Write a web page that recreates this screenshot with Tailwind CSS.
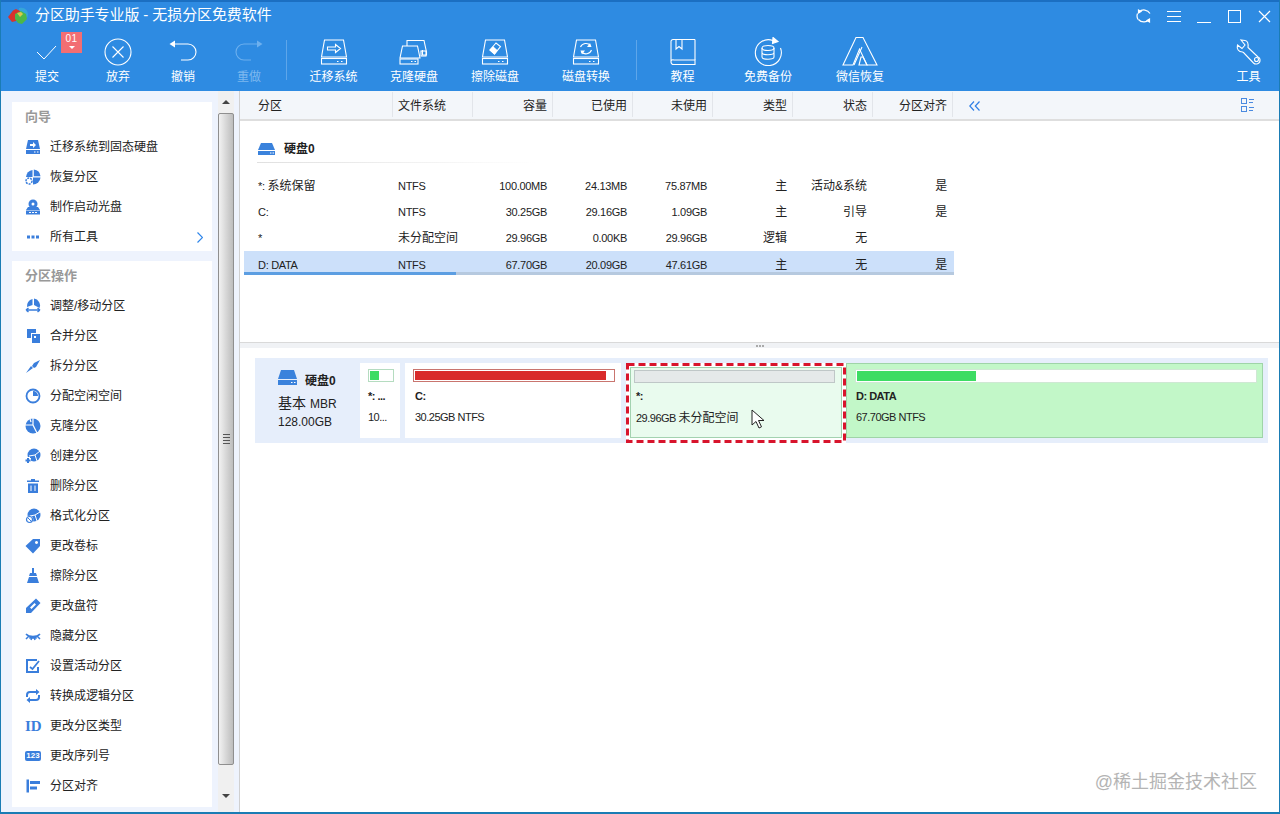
<!DOCTYPE html>
<html lang="zh-CN">
<head>
  <meta charset="UTF-8">
  <title>分区助手专业版</title>
  <script src="https://cdn.jsdelivr.net/npm/@tailwindcss/browser@4"></script>
</head>
<body class="overflow-hidden bg-white">
<div class="relative w-[1280px] h-[814px] flex flex-col overflow-hidden bg-white text-[12px] text-[#222] font-['Liberation_Sans','Noto_Sans_CJK_SC',sans-serif] border-x border-b-2 border-[#1a7cb4]">

  <!-- title bar + toolbar -->
  <header class="-mx-px h-[91px] shrink-0 bg-[#2e8be2] border-t-2 border-[#1b6fc2] text-white">
    <div class="h-[28px] flex items-center">
      <svg class="ml-[7px] w-[22px] h-[18px]" viewBox="0 0 22 18">
        <path d="M12 1c5-1.500 9 2 9 6.500 0 3-2 5-4 5.500l-5-6z" fill="#35a6d8"/>
        <path d="M1 10 6 3.500 9 2l4 2 1 6-5 4-4 1z" fill="#d8322c"/>
        <path d="M8 7l6-3 5 3 1 5-5 5-4-1-3-4z" fill="#4cb848"/>
        <path d="M10 6l4-1 2 2-3 3z" fill="#d9c94a"/>
      </svg>
      <span class="ml-[6px] -mt-[2px] text-[15px] tracking-[-0.1px]">分区助手专业版 - 无损分区免费软件</span>
      <div class="ml-auto mr-px flex">
        <div class="w-[30px] h-[28px] flex items-center justify-center">
          <svg class="w-[16px] h-[16px]" viewBox="0 0 16 16" fill="none" stroke="#fff" stroke-width="1.2"><path d="M3 4a7 7 0 0 1 11 1.500M13.500 11a7 7 0 0 1-11 .5M1.500 5.500A7 7 0 0 0 2 11.500"/><path d="M5 3.500 2.500 2v3zM11 12.500l2.500 1.500v-3z" fill="#fff"/></svg>
        </div>
        <div class="w-[30px] h-[28px] flex items-center justify-center">
          <svg class="w-[14px] h-[13px]" viewBox="0 0 14 13" stroke="#fff" stroke-width="1"><path d="M0 1.500h14M0 6.500h14M0 11.500h14"/></svg>
        </div>
        <div class="w-[30px] h-[28px] flex items-center justify-center">
          <svg class="w-[14px] h-[13px]" viewBox="0 0 14 13" stroke="#fff" stroke-width="1"><path d="M0 12.500h14"/></svg>
        </div>
        <div class="w-[30px] h-[28px] flex items-center justify-center">
          <div class="w-[13px] h-[13px] border-[1.5px] border-white"></div>
        </div>
        <div class="w-[30px] h-[28px] flex items-center justify-center">
          <svg class="w-[13px] h-[13px]" viewBox="0 0 13 13" stroke="#fff" stroke-width="1.2"><path d="M1 1l11 11M12 1 1 12"/></svg>
        </div>
      </div>
    </div>
    <div class="h-[61px] flex pl-[12px]">
      <div class="relative w-[70px] flex flex-col items-center">
        <svg class="mt-[7px] h-[30px] w-[30px]" viewBox="0 0 30 30" fill="none" stroke="#fff" stroke-width="1"><path d="M5 15l7 7L24 9"/></svg>
        <span class="mt-[3px] leading-[14px]">提交</span>
        <div class="absolute left-[49px] top-[2px] w-[21px] h-[21px] bg-[#f26e73] flex flex-col items-center text-[10px] leading-[13px] tracking-[0.5px]">01<span class="mt-[1px] w-0 h-0 border-x-[3px] border-t-[3px] border-x-transparent border-t-white"></span></div>
      </div>
      <div class="w-[72px] flex flex-col items-center">
        <svg class="mt-[7px] h-[30px] w-[30px]" viewBox="0 0 30 30" fill="none" stroke="#fff" stroke-width="1.1"><circle cx="15" cy="15" r="13"/><path d="M9.500 9.500l11 11M20.500 9.500l-11 11"/></svg>
        <span class="mt-[3px] leading-[14px]">放弃</span>
      </div>
      <div class="w-[58px] flex flex-col items-center">
        <svg class="mt-[7px] h-[30px] w-[30px]" viewBox="0 0 30 30" fill="none" stroke="#fff" stroke-width="1.1"><path d="M5 7h15a8 8 0 0 1 0 16h-7"/><path d="M7 3.500v7L1.500 7z" fill="#fff" stroke="none"/></svg>
        <span class="mt-[3px] leading-[14px]">撤销</span>
      </div>
      <div class="w-[74px] flex flex-col items-center text-[#7db8ef]">
        <svg class="mt-[7px] h-[30px] w-[30px]" viewBox="0 0 30 30" fill="none" stroke="#6db0ee" stroke-width="1.1"><path d="M25 7H10a8 8 0 0 0 0 16h7"/><path d="M23 3.500v7L28.500 7z" fill="#6db0ee" stroke="none"/></svg>
        <span class="mt-[3px] leading-[14px]">重做</span>
      </div>
      <div class="w-px h-[40px] mt-[10px] bg-[#5ea6ea]"></div>
      <div class="w-[93px] flex flex-col items-center">
        <svg class="mt-[8px] h-[28px] w-[30px]" viewBox="0 0 30 28" fill="none" stroke="#fff" stroke-width="1.1"><path d="M5.500 2h19L27.500 19h-25z"/><rect x="2.500" y="20.500" width="25" height="5.500"/><path d="M22 23.500h1.500M18 23.500h1.500"/><path d="M8.500 9h8V6.500L21.500 10.500l-5 4V12h-8z"/></svg>
        <span class="mt-[4px] leading-[14px]">迁移系统</span>
      </div>
      <div class="w-[68px] flex flex-col items-center">
        <svg class="mt-[8px] h-[28px] w-[30px]" viewBox="0 0 30 28" fill="none" stroke="#fff" stroke-width="1.1"><path d="M3.500 8h15L21 20H1z"/><rect x="1" y="21" width="18" height="5"/><path d="M8 8V2.500h17L27.500 14v3h-4v-5"/><rect x="22" y="13" width="5" height="5"/><path d="M12 23.500h1.500M15.500 23.500H17"/></svg>
        <span class="mt-[4px] leading-[14px]">克隆硬盘</span>
      </div>
      <div class="w-[94px] flex flex-col items-center">
        <svg class="mt-[8px] h-[28px] w-[30px]" viewBox="0 0 30 28" fill="none" stroke="#fff" stroke-width="1.1"><path d="M5.500 2h19L27.500 19h-25z"/><rect x="2.500" y="20.500" width="25" height="5.500"/><path d="M22 23.500h1.500M18 23.500h1.500"/><path d="M10 12l6-7 4.500 3.500-6 7.500z"/><path d="M13 9l4 3.500-2.500 3.500-4.500-4z" fill="#fff"/></svg>
        <span class="mt-[4px] leading-[14px]">擦除磁盘</span>
      </div>
      <div class="w-[88px] flex flex-col items-center">
        <svg class="mt-[8px] h-[28px] w-[30px]" viewBox="0 0 30 28" fill="none" stroke="#fff" stroke-width="1.1"><path d="M5.500 2h19L27.500 19h-25z"/><rect x="2.500" y="20.500" width="25" height="5.500"/><path d="M22 23.500h1.500M18 23.500h1.500"/><path d="M9.500 9a6 6 0 0 1 10-1.500M20.500 12a6 6 0 0 1-10 2"/><path d="M19 5l1.500 4H16zM11 16.500 9.500 12.500H14z" fill="#fff" stroke="none"/></svg>
        <span class="mt-[4px] leading-[14px]">磁盘转换</span>
      </div>
      <div class="ml-[6px] w-px h-[40px] mt-[10px] bg-[#5ea6ea]"></div>
      <div class="w-[91px] flex flex-col items-center">
        <svg class="mt-[8px] h-[28px] w-[26px]" viewBox="0 0 26 28" fill="none" stroke="#fff" stroke-width="1.1"><path d="M25 1.500H3a2 2 0 0 0-2 2V24a2.500 2.500 0 0 0 2.500 2.500H25V22H4a2 2 0 0 0-3 2"/><path d="M25 1.500V22M6 1.500V11l3-2.500L12 11V1.500"/></svg>
        <span class="mt-[4px] leading-[14px]">教程</span>
      </div>
      <div class="w-[80px] flex flex-col items-center">
        <svg class="mt-[7px] h-[29px] w-[30px]" viewBox="0 0 30 29" fill="none" stroke="#fff" stroke-width="1.1"><path d="M20 3.500A13 13 0 1 0 27.500 11"/><path d="M20 .5l5 4-5.500 2z" fill="#fff"/><ellipse cx="15" cy="11" rx="6" ry="2.500"/><path d="M9 11v9c0 3 12 3 12 0v-9M9 15.500c0 3 12 3 12 0"/></svg>
        <span class="mt-[4px] leading-[14px]">免费备份</span>
      </div>
      <div class="w-[104px] flex flex-col items-center">
        <svg class="mt-[6px] h-[30px] w-[36px]" viewBox="0 0 36 30" fill="none" stroke="#fff" stroke-width="1.1"><path d="M14 1.500h7L35 29H25L17.500 13 11 29H1z"/><path d="M12 29 20 11M17 29h8l-4-8h-2z"/></svg>
        <span class="mt-[4px] leading-[14px]">微信恢复</span>
      </div>
      <div class="ml-auto w-[63px] flex flex-col items-center">
        <svg class="mt-[7px] h-[30px] w-[26px]" viewBox="0 0 26 26" fill="none" stroke="#fff" stroke-width="1.1"><path d="M9 1.500 5 1l4 5-3 3.500L1.500 6c-1 4 1 7 5 7l1 .5 10 10.500c2 2 7 1 6.500-3.500 0-1-1-2-2-2.500L12 8.500C12.500 4.500 12 2 9 1.500z"/><circle cx="20.500" cy="20.500" r="2"/></svg>
        <span class="mt-[3px] leading-[14px]">工具</span>
      </div>
    </div>
  </header>

  <div class="flex-1 flex min-h-0">
    <!-- left panel -->
    <aside class="w-[238px] shrink-0 bg-[#eef3fd] flex pl-[11px] pt-[11px]">
      <div class="w-[200px] flex flex-col gap-[10px]">
        <section class="bg-white h-[149px] pl-[13px]">
          <h2 class="h-[30px] flex items-center font-bold text-[13px] text-[#999]">向导</h2>
          <div class="h-[30px] flex items-center gap-[9px]">
            <svg class="w-4 h-4" viewBox="0 0 16 16" fill="#3a7edc"><path d="M3 1h10l2 9H1z"/><rect x="1" y="11" width="14" height="4"/><path d="M5 5h3V3l3 3-3 3V7H5z" fill="#fff"/><path d="M9 13h1.500M12 13h1.500" stroke="#fff"/></svg>
            <span>迁移系统到固态硬盘</span>
          </div>
          <div class="h-[30px] flex items-center gap-[9px]">
            <svg class="w-4 h-4" viewBox="0 0 16 16" fill="#3a7edc"><path d="M8.800 .5a7.500 7.500 0 0 1 6.700 6.700H8.800z"/><path d="M7.500 1A7.500 7.500 0 0 0 1 8h6.500z"/><path d="M15.500 8.500A7.500 7.500 0 0 1 8 15.500V8.500z"/><circle cx="4" cy="12" r="3" fill="none" stroke="#3a7edc" stroke-width="1.500" stroke-dasharray="2 1"/></svg>
            <span>恢复分区</span>
          </div>
          <div class="h-[30px] flex items-center gap-[9px]">
            <svg class="w-4 h-4" viewBox="0 0 16 16" fill="#3a7edc"><circle cx="8" cy="5" r="4.500"/><circle cx="8" cy="5" r="1.500" fill="#fff"/><path d="M3 8h10l2 3H1z"/><rect x="1" y="11.500" width="14" height="4"/><path d="M4 13.500h2M7 13.500h2M10 13.500h2" stroke="#fff"/></svg>
            <span>制作启动光盘</span>
          </div>
          <div class="h-[30px] flex items-center gap-[9px] pr-[9px]">
            <svg class="w-4 h-4" viewBox="0 0 16 16" fill="#3a7edc"><rect x="2" y="6.500" width="3" height="3"/><rect x="6.500" y="6.500" width="3" height="3"/><rect x="11" y="6.500" width="3" height="3"/></svg>
            <span>所有工具</span>
            <svg class="ml-auto w-[6px] h-[11px]" viewBox="0 0 6 11" fill="none" stroke="#2f86ea" stroke-width="1.2"><path d="M.5.500l5 5-5 5"/></svg>
          </div>
        </section>
        <section class="bg-white h-[546px] pl-[13px]">
          <h2 class="h-[30px] flex items-center font-bold text-[13px] text-[#999]">分区操作</h2>
          <div class="h-[30px] flex items-center gap-[9px]">
            <svg class="w-4 h-4" viewBox="0 0 16 16" fill="#3a7edc"><path d="M9 .5a7 7 0 0 1 5.500 9.500L9 7z"/><path d="M7.500 1A7 7 0 0 0 2 9l5.500-2z"/><path d="M1 12h14M1 12l2.500-2M1 12l2.500 2M15 12l-2.500-2M15 12l-2.500 2" stroke="#3a7edc" stroke-width="1.500" fill="none"/></svg>
            <span>调整/移动分区</span>
          </div>
          <div class="h-[30px] flex items-center gap-[9px]">
            <svg class="w-4 h-4" viewBox="0 0 16 16" fill="#3a7edc"><path d="M2 1h9v4H6v5H2z"/><path d="M7 6h8v9H7zM9 8v2h2V8z" fill-rule="evenodd"/></svg>
            <span>合并分区</span>
          </div>
          <div class="h-[30px] flex items-center gap-[9px]">
            <svg class="w-4 h-4" viewBox="0 0 16 16" fill="#3a7edc"><path d="M1 15 6 8l2 2zM15 2 9 5 7 8l2 2 2-1z"/></svg>
            <span>拆分分区</span>
          </div>
          <div class="h-[30px] flex items-center gap-[9px]">
            <svg class="w-4 h-4" viewBox="0 0 16 16" fill="#3a7edc"><circle cx="8" cy="8" r="6.500" fill="none" stroke="#3a7edc" stroke-width="1.800"/><path d="M8 3v5h5a5 5 0 0 0-5-5z"/></svg>
            <span>分配空闲空间</span>
          </div>
          <div class="h-[30px] flex items-center gap-[9px]">
            <svg class="w-4 h-4" viewBox="0 0 16 16" fill="#3a7edc"><circle cx="8" cy="8" r="7.500"/><path d="M8 0v7l4 8M8 7H0M5 1l1 3" stroke="#fff" stroke-width="1.200" fill="none"/></svg>
            <span>克隆分区</span>
          </div>
          <div class="h-[30px] flex items-center gap-[9px]">
            <svg class="w-4 h-4" viewBox="0 0 16 16" fill="#3a7edc"><circle cx="9" cy="7" r="6.500"/><path d="M4 8l6-1 5-4M10 7l2 6" stroke="#fff" fill="none"/><path d="M3 9v6M0 12h6" stroke="#fff" stroke-width="4"/><path d="M3 10v5M.5 12.500h5" stroke="#3a7edc" stroke-width="2"/></svg>
            <span>创建分区</span>
          </div>
          <div class="h-[30px] flex items-center gap-[9px]">
            <svg class="w-4 h-4" viewBox="0 0 16 16" fill="#3a7edc"><path d="M6 1h4v1.500h4V4H2V2.500h4z"/><path d="M3 5.500h10V15H3zM5.500 7.500v5.500h1V7.500zM9.500 7.500v5.500h1V7.500z" fill-rule="evenodd"/></svg>
            <span>删除分区</span>
          </div>
          <div class="h-[30px] flex items-center gap-[9px]">
            <svg class="w-4 h-4" viewBox="0 0 16 16" fill="#3a7edc"><circle cx="9" cy="7" r="6.500"/><path d="M5 8l5-1 5-3M10 7l2 6" stroke="#fff" fill="none"/><circle cx="4.500" cy="11.500" r="3.800" fill="#fff"/><circle cx="4.500" cy="11.500" r="3" fill="none" stroke="#3a7edc" stroke-width="1.200"/><path d="M2.500 9.500l4 4" stroke="#3a7edc"/></svg>
            <span>格式化分区</span>
          </div>
          <div class="h-[30px] flex items-center gap-[9px]">
            <svg class="w-4 h-4" viewBox="0 0 16 16" fill="#3a7edc"><path d="M8 1h7v7l-7 7.500L.5 8zM11.500 3a1.500 1.500 0 1 0 .01 0z" fill-rule="evenodd"/></svg>
            <span>更改卷标</span>
          </div>
          <div class="h-[30px] flex items-center gap-[9px]">
            <svg class="w-4 h-4" viewBox="0 0 16 16" fill="#3a7edc"><rect x="7" y="0" width="2" height="5"/><path d="M5 5h6l1 3H4z"/><path d="M4 9h8l2 6H2z"/></svg>
            <span>擦除分区</span>
          </div>
          <div class="h-[30px] flex items-center gap-[9px]">
            <svg class="w-4 h-4" viewBox="0 0 16 16" fill="#3a7edc"><path d="M11 .5l4.500 4.500L6 15H1v-5zM9.500 5 5 9.500l1.500 1.500L11 6.500z" fill-rule="evenodd"/></svg>
            <span>更改盘符</span>
          </div>
          <div class="h-[30px] flex items-center gap-[9px]">
            <svg class="w-4 h-4" viewBox="0 0 16 16" fill="none" stroke="#3a7edc" stroke-width="1.500"><path d="M1 6c3 3.500 11 3.500 14 0"/><path d="M1 11l3-3M15 11l-3-3M6 12l1-3M10 12 9 9" stroke-width="1.500"/><path d="M5 8.500h6v1.500H5z" fill="#3a7edc"/></svg>
            <span>隐藏分区</span>
          </div>
          <div class="h-[30px] flex items-center gap-[9px]">
            <svg class="w-4 h-4" viewBox="0 0 16 16" fill="none" stroke="#3a7edc" stroke-width="2"><path d="M13 9v5H2V2h10"/><path d="M5 9l2.500 2L14 3" stroke-width="1.800"/></svg>
            <span>设置活动分区</span>
          </div>
          <div class="h-[30px] flex items-center gap-[9px]">
            <svg class="w-4 h-4" viewBox="0 0 16 16" fill="none" stroke="#3a7edc" stroke-width="2"><path d="M2 9V7a3 3 0 0 1 3-3h7M14 7v2a3 3 0 0 1-3 3H4"/><path d="M11 1l3.500 3L11 7zM5 9l-3.500 3L5 15z" fill="#3a7edc" stroke="none"/></svg>
            <span>转换成逻辑分区</span>
          </div>
          <div class="h-[30px] flex items-center gap-[9px]">
            <span class="w-4 text-center font-['Liberation_Serif'] font-bold text-[15px] leading-4 text-[#3a7edc]">ID</span>
            <span>更改分区类型</span>
          </div>
          <div class="h-[30px] flex items-center gap-[9px]">
            <span class="w-4 h-[10px] rounded-[2px] bg-[#3a7edc] text-center font-bold text-[8px] leading-[10px] text-white">123</span>
            <span>更改序列号</span>
          </div>
          <div class="h-[30px] flex items-center gap-[9px]">
            <svg class="w-4 h-4" viewBox="0 0 16 16" fill="#3a7edc"><rect x="1.500" y="1.500" width="2.500" height="13"/><rect x="5" y="3" width="10" height="3"/><rect x="5" y="8.500" width="7" height="3"/></svg>
            <span>分区对齐</span>
          </div>
        </section>
      </div>
      <!-- scrollbar -->
      <div class="ml-[6px] -mt-[11px] w-[16px] h-[721px] bg-[#f0f0f0] flex flex-col items-center">
        <div class="h-[22px] w-full flex items-center justify-center"><span class="w-0 h-0 border-x-[4px] border-b-[4px] border-x-transparent border-b-[#444]"></span></div>
        <div class="w-full h-[652px] rounded-[2px] border border-[#8f8f8f] bg-gradient-to-r from-[#f2f2f2] to-[#bdbdbd] flex flex-col items-center justify-center gap-[2px]">
          <span class="w-[7px] h-px bg-[#555]"></span><span class="w-[7px] h-px bg-[#555]"></span><span class="w-[7px] h-px bg-[#555]"></span><span class="w-[7px] h-px bg-[#555]"></span>
        </div>
        <div class="flex-1 w-full flex items-center justify-center pt-[14px]"><span class="w-0 h-0 border-x-[4px] border-t-[4px] border-x-transparent border-t-[#444]"></span></div>
      </div>
    </aside>

    <!-- right panel -->
    <main class="flex-1 flex flex-col border-l border-[#d0d0d0] min-w-0">
      <div class="h-[30px] shrink-0 flex items-center bg-[#f3f6fa] border-b-2 border-[#dedede] text-[#222]">
        <div class="w-[713px] h-full pt-px grid grid-cols-[153px_repeat(7,80px)] items-start">
          <span class="pl-[18px] h-[25px] leading-[29px] border-r border-[#e2e5ea]">分区</span>
          <span class="pl-[5px] h-[25px] leading-[29px] border-r border-[#e2e5ea]">文件系统</span>
          <span class="pr-[5px] h-[25px] leading-[29px] text-right border-r border-[#e2e5ea]">容量</span>
          <span class="pr-[5px] h-[25px] leading-[29px] text-right border-r border-[#e2e5ea]">已使用</span>
          <span class="pr-[5px] h-[25px] leading-[29px] text-right border-r border-[#e2e5ea]">未使用</span>
          <span class="pr-[5px] h-[25px] leading-[29px] text-right border-r border-[#e2e5ea]">类型</span>
          <span class="pr-[5px] h-[25px] leading-[29px] text-right border-r border-[#e2e5ea]">状态</span>
          <span class="pr-[5px] h-[25px] leading-[29px] text-right border-r border-[#e2e5ea]">分区对齐</span>
        </div>
        <svg class="ml-[16px] mt-[2px] w-[11px] h-[10px]" viewBox="0 0 11 10" fill="none" stroke="#2f7fe6" stroke-width="1.2"><path d="M5 .5.800 5 5 9.500M10.500.500 6.300 5l4.200 4.500"/></svg>
        <svg class="ml-auto mr-[24px] mt-[1px] w-[14px] h-[15px]" viewBox="0 0 14 15" fill="none" stroke="#4a8ae0"><rect x=".5" y=".5" width="5" height="5"/><rect x=".5" y="8.500" width="5" height="5"/><path d="M8 1.500h5M8 4.500h4M8 9.500h5M8 12.500h4"/></svg>
      </div>

      <div class="h-[221px] shrink-0 pl-[4px]">
        <div class="ml-[14px] pt-[21px] h-[42px] flex items-start">
          <svg class="mt-[1px] w-[17px] h-[12px]" viewBox="0 0 17 12" fill="#3a82dc"><path d="M3 0h11l3 7H0z"/><rect y="8" width="17" height="4"/><path d="M12 10h1.500M14.500 10H16" stroke="#fff"/></svg>
          <span class="ml-[9px] font-bold leading-[14px]">硬盘0</span>
        </div>
        <div class="ml-[13px] -mt-[1px] w-[280px] h-px bg-gradient-to-r from-[#e0e0e0] to-transparent"></div>
        <div class="mt-[10px] w-[710px] h-[26px] grid grid-cols-[149px_repeat(7,80px)] items-center text-[11px] tracking-[-0.3px]">
          <span class="pl-[14px]">*: <span class="text-[12px] tracking-normal">系统保留</span></span><span class="pl-[5px]">NTFS</span><span class="pr-[6px] text-right">100.00MB</span><span class="pr-[6px] text-right">24.13MB</span><span class="pr-[6px] text-right">75.87MB</span><span class="pr-[6px] text-right text-[12px]">主</span><span class="pr-[6px] text-right text-[12px] tracking-normal">活动&amp;系统</span><span class="pr-[6px] text-right text-[12px]">是</span>
        </div>
        <div class="w-[710px] h-[26px] grid grid-cols-[149px_repeat(7,80px)] items-center text-[11px] tracking-[-0.3px]">
          <span class="pl-[14px]">C:</span><span class="pl-[5px]">NTFS</span><span class="pr-[6px] text-right">30.25GB</span><span class="pr-[6px] text-right">29.16GB</span><span class="pr-[6px] text-right">1.09GB</span><span class="pr-[6px] text-right text-[12px]">主</span><span class="pr-[6px] text-right text-[12px] tracking-normal">引导</span><span class="pr-[6px] text-right text-[12px]">是</span>
        </div>
        <div class="w-[710px] h-[26px] grid grid-cols-[149px_repeat(7,80px)] items-center text-[11px] tracking-[-0.3px]">
          <span class="pl-[14px]">*</span><span class="pl-[5px] text-[12px] tracking-normal">未分配空间</span><span class="pr-[6px] text-right">29.96GB</span><span class="pr-[6px] text-right">0.00KB</span><span class="pr-[6px] text-right">29.96GB</span><span class="pr-[6px] text-right text-[12px] tracking-normal">逻辑</span><span class="pr-[6px] text-right text-[12px]">无</span><span></span>
        </div>
        <div class="w-[710px] bg-[#cce0fa]">
          <div class="h-[21px] pt-[5px] grid grid-cols-[149px_repeat(7,80px)] items-center text-[11px] tracking-[-0.3px]">
            <span class="pl-[14px]">D: DATA</span><span class="pl-[5px]">NTFS</span><span class="pr-[6px] text-right">67.70GB</span><span class="pr-[6px] text-right">20.09GB</span><span class="pr-[6px] text-right">47.61GB</span><span class="pr-[6px] text-right text-[12px]">主</span><span class="pr-[6px] text-right text-[12px]">无</span><span class="pr-[6px] text-right text-[12px]">是</span>
          </div>
          <div class="h-[3px] flex bg-[#b6c9df]"><div class="w-[212px] bg-[#5c9ee2]"></div></div>
        </div>
      </div>

      <div class="h-[6px] shrink-0 bg-[#f0f2f5] border-t border-[#d9d9d9] flex items-center justify-center gap-px">
        <span class="w-[2px] h-[2px] bg-[#aaa]"></span><span class="w-[2px] h-[2px] bg-[#aaa]"></span><span class="w-[2px] h-[2px] bg-[#aaa]"></span>
      </div>

      <div class="pl-[15px] pt-[10px]">
        <div class="w-[1013px] h-[85px] bg-[#e6eefb] flex items-start pt-[5px] text-[11px] tracking-[-0.5px]">
          <div class="w-[105px] h-[75px] pl-[23px] text-[#222] tracking-normal">
            <div class="flex items-center h-[24px] mt-[6px]">
              <svg class="-mt-[7px] w-[19px] h-[15px]" viewBox="0 0 19 15" fill="#3a82dc"><path d="M3 0h13l3 9H0z"/><rect y="10" width="19" height="5"/><path d="M13 12.500h1.500M16 12.500h1.500" stroke="#fff"/></svg>
              <span class="ml-[8px] font-bold text-[12px]">硬盘0</span>
            </div>
            <div class="h-[20px] leading-[20px] text-[14px] whitespace-nowrap">基本 <span class="text-[12px]">MBR</span></div>
            <div class="h-[18px] leading-[18px] text-[12px]">128.00GB</div>
          </div>
          <div class="w-[40px] h-[75px] bg-white pl-[8px] pt-[6px]">
            <div class="w-[26px] h-[13px] border border-[#b5dcc0] bg-white p-px"><div class="w-[9px] h-full bg-[#3ddc63]"></div></div>
            <div class="mt-[6px] h-[16px] leading-[16px] font-bold">*: ...</div>
            <div class="mt-[5px] h-[16px] leading-[16px]">10...</div>
          </div>
          <div class="ml-[5px] w-[216px] h-[75px] bg-white pl-[8px] pt-[6px]">
            <div class="w-[202px] h-[13px] border border-[#c9756f] bg-white p-px"><div class="w-[191px] h-full bg-[#d92b2b]"></div></div>
            <div class="mt-[6px] pl-[2px] h-[16px] leading-[16px] font-bold">C:</div>
            <div class="mt-[5px] pl-[2px] h-[16px] leading-[16px]">30.25GB NTFS</div>
          </div>
          <div class="relative ml-[5px] w-[220px] h-[80px] bg-white p-[4px]">
            <div class="h-[71px] border border-[#a3d2b0] bg-[#e9fbee] pl-[3px] pt-[2px]">
              <div class="w-[201px] h-[13px] border border-[#bfc7c7] bg-[#e5e9e9]"></div>
              <div class="mt-[5px] h-[16px] leading-[16px] font-bold pl-[2px]">*:</div>
              <div class="mt-[6px] h-[16px] leading-[16px] pl-[2px]">29.96GB <span class="text-[12px] tracking-normal">未分配空间</span></div>
            </div>
            <svg class="absolute inset-0 w-[220px] h-[80px]" viewBox="0 0 220 80" fill="none" stroke="#d8142c" stroke-width="3" stroke-dasharray="7 4"><rect x="1.500" y="1.500" width="217" height="77"/></svg>
            <svg class="absolute left-[125px] top-[46px] w-[14px] h-[21px]" viewBox="0 0 14 21" fill="#fff" stroke="#222"><path d="M1 1v15l4-3.500 3 6.500 2.500-1.200-3-6.300H13z"/></svg>
          </div>
          <div class="w-[417px] h-[75px] border border-[#9fd4a8] bg-[#c2f7c8] pl-[8px] pt-[5px]">
            <div class="w-[402px] h-[14px] border border-[#cfe8d4] bg-white p-px"><div class="w-[119px] h-full bg-[#3ddc63]"></div></div>
            <div class="mt-[5px] pl-px h-[16px] leading-[16px] font-bold">D: DATA</div>
            <div class="mt-[5px] pl-px h-[16px] leading-[16px]">67.70GB NTFS</div>
          </div>
        </div>
      </div>
    </main>
  </div>

  <span class="absolute right-[22px] bottom-[18px] text-[18px] leading-[24px] text-[#b4b4b4]">@稀土掘金技术社区</span>
</div>
</body>
</html>
